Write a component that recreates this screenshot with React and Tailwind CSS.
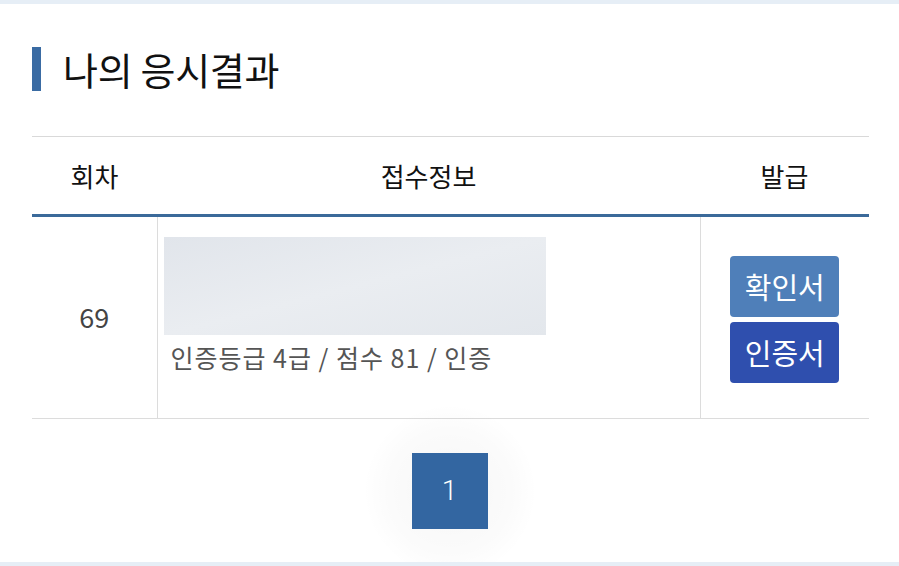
import React from "react";

const font = { fontFamily: '"Noto Sans CJK KR", "Noto Sans", sans-serif' };

const ResultRow = ({ round, info }) => (
    <tr className="border-b border-[#dcdcdc]">
        <td className="h-[203px] border-r border-[#dcdcdc] text-center text-[27px] text-[#444]">
            {round}
        </td>
        <td className="border-r border-[#dcdcdc] px-[6px] align-top pt-[20px]">
            <div className="h-[98px] w-[382px] bg-gradient-to-br from-[#e1e5eb] via-[#eaedf1] to-[#e3e7ec]" />
            <p className="mt-[4px] pl-[7px] text-[25px] tracking-[1px] text-[#555]">{info}</p>
        </td>
        <td className="pt-[3px] text-center">
            <div className="flex flex-col items-center gap-[5px]">
                <button className="h-[61px] w-[109px] rounded-[4px] bg-[#4f7fb9] text-[29px] leading-none text-white">
                    확인서
                </button>
                <button className="h-[61px] w-[109px] rounded-[4px] bg-[#2f4fae] text-[29px] leading-none text-white">
                    인증서
                </button>
            </div>
        </td>
    </tr>
);

export default function App() {
    return (
        <div className="flex h-[566px] w-[899px] flex-col bg-white" style={font}>
            <div className="h-[4px] bg-[#e6eef6]" />
            <div className="flex-1 px-[32px]">
                <div className="mt-[43px] flex items-center">
                    <div className="h-[44px] w-[9px] bg-[#3a6ba3]" />
                    <h2 className="ml-[22px] text-[38px] leading-none text-[#111] tracking-[-0.3px]">나의 응시결과</h2>
                </div>

                <table className="mt-[45px] w-[837px] border-collapse border-t border-[#d9d9d9]">
                    <thead>
                        <tr className="border-b-[3px] border-[#3b6a9a] text-[26px] text-[#111]">
                            <th className="h-[79px] w-[125px] font-normal">회차</th>
                            <th className="w-[543px] font-normal">접수정보</th>
                            <th className="font-normal">발급</th>
                        </tr>
                    </thead>
                    <tbody>
                        <ResultRow round="69" info="인증등급 4급 / 점수 81 / 인증" />
                    </tbody>
                </table>

                <div className="mt-[34px] flex justify-center">
                    <div className="-m-[50px] rounded-full bg-[radial-gradient(circle,rgba(0,0,0,0.035)_0%,rgba(0,0,0,0.015)_50%,transparent_70%)] p-[50px]">
                        <button className="flex h-[76px] w-[76px] items-center justify-center bg-[#3366a1] font-['Roboto',sans-serif] text-[28px] font-light text-white">
                            1
                        </button>
                    </div>
                </div>
            </div>
            <div className="h-[4px] bg-[#e6eef6]" />
        </div>
    );
}
